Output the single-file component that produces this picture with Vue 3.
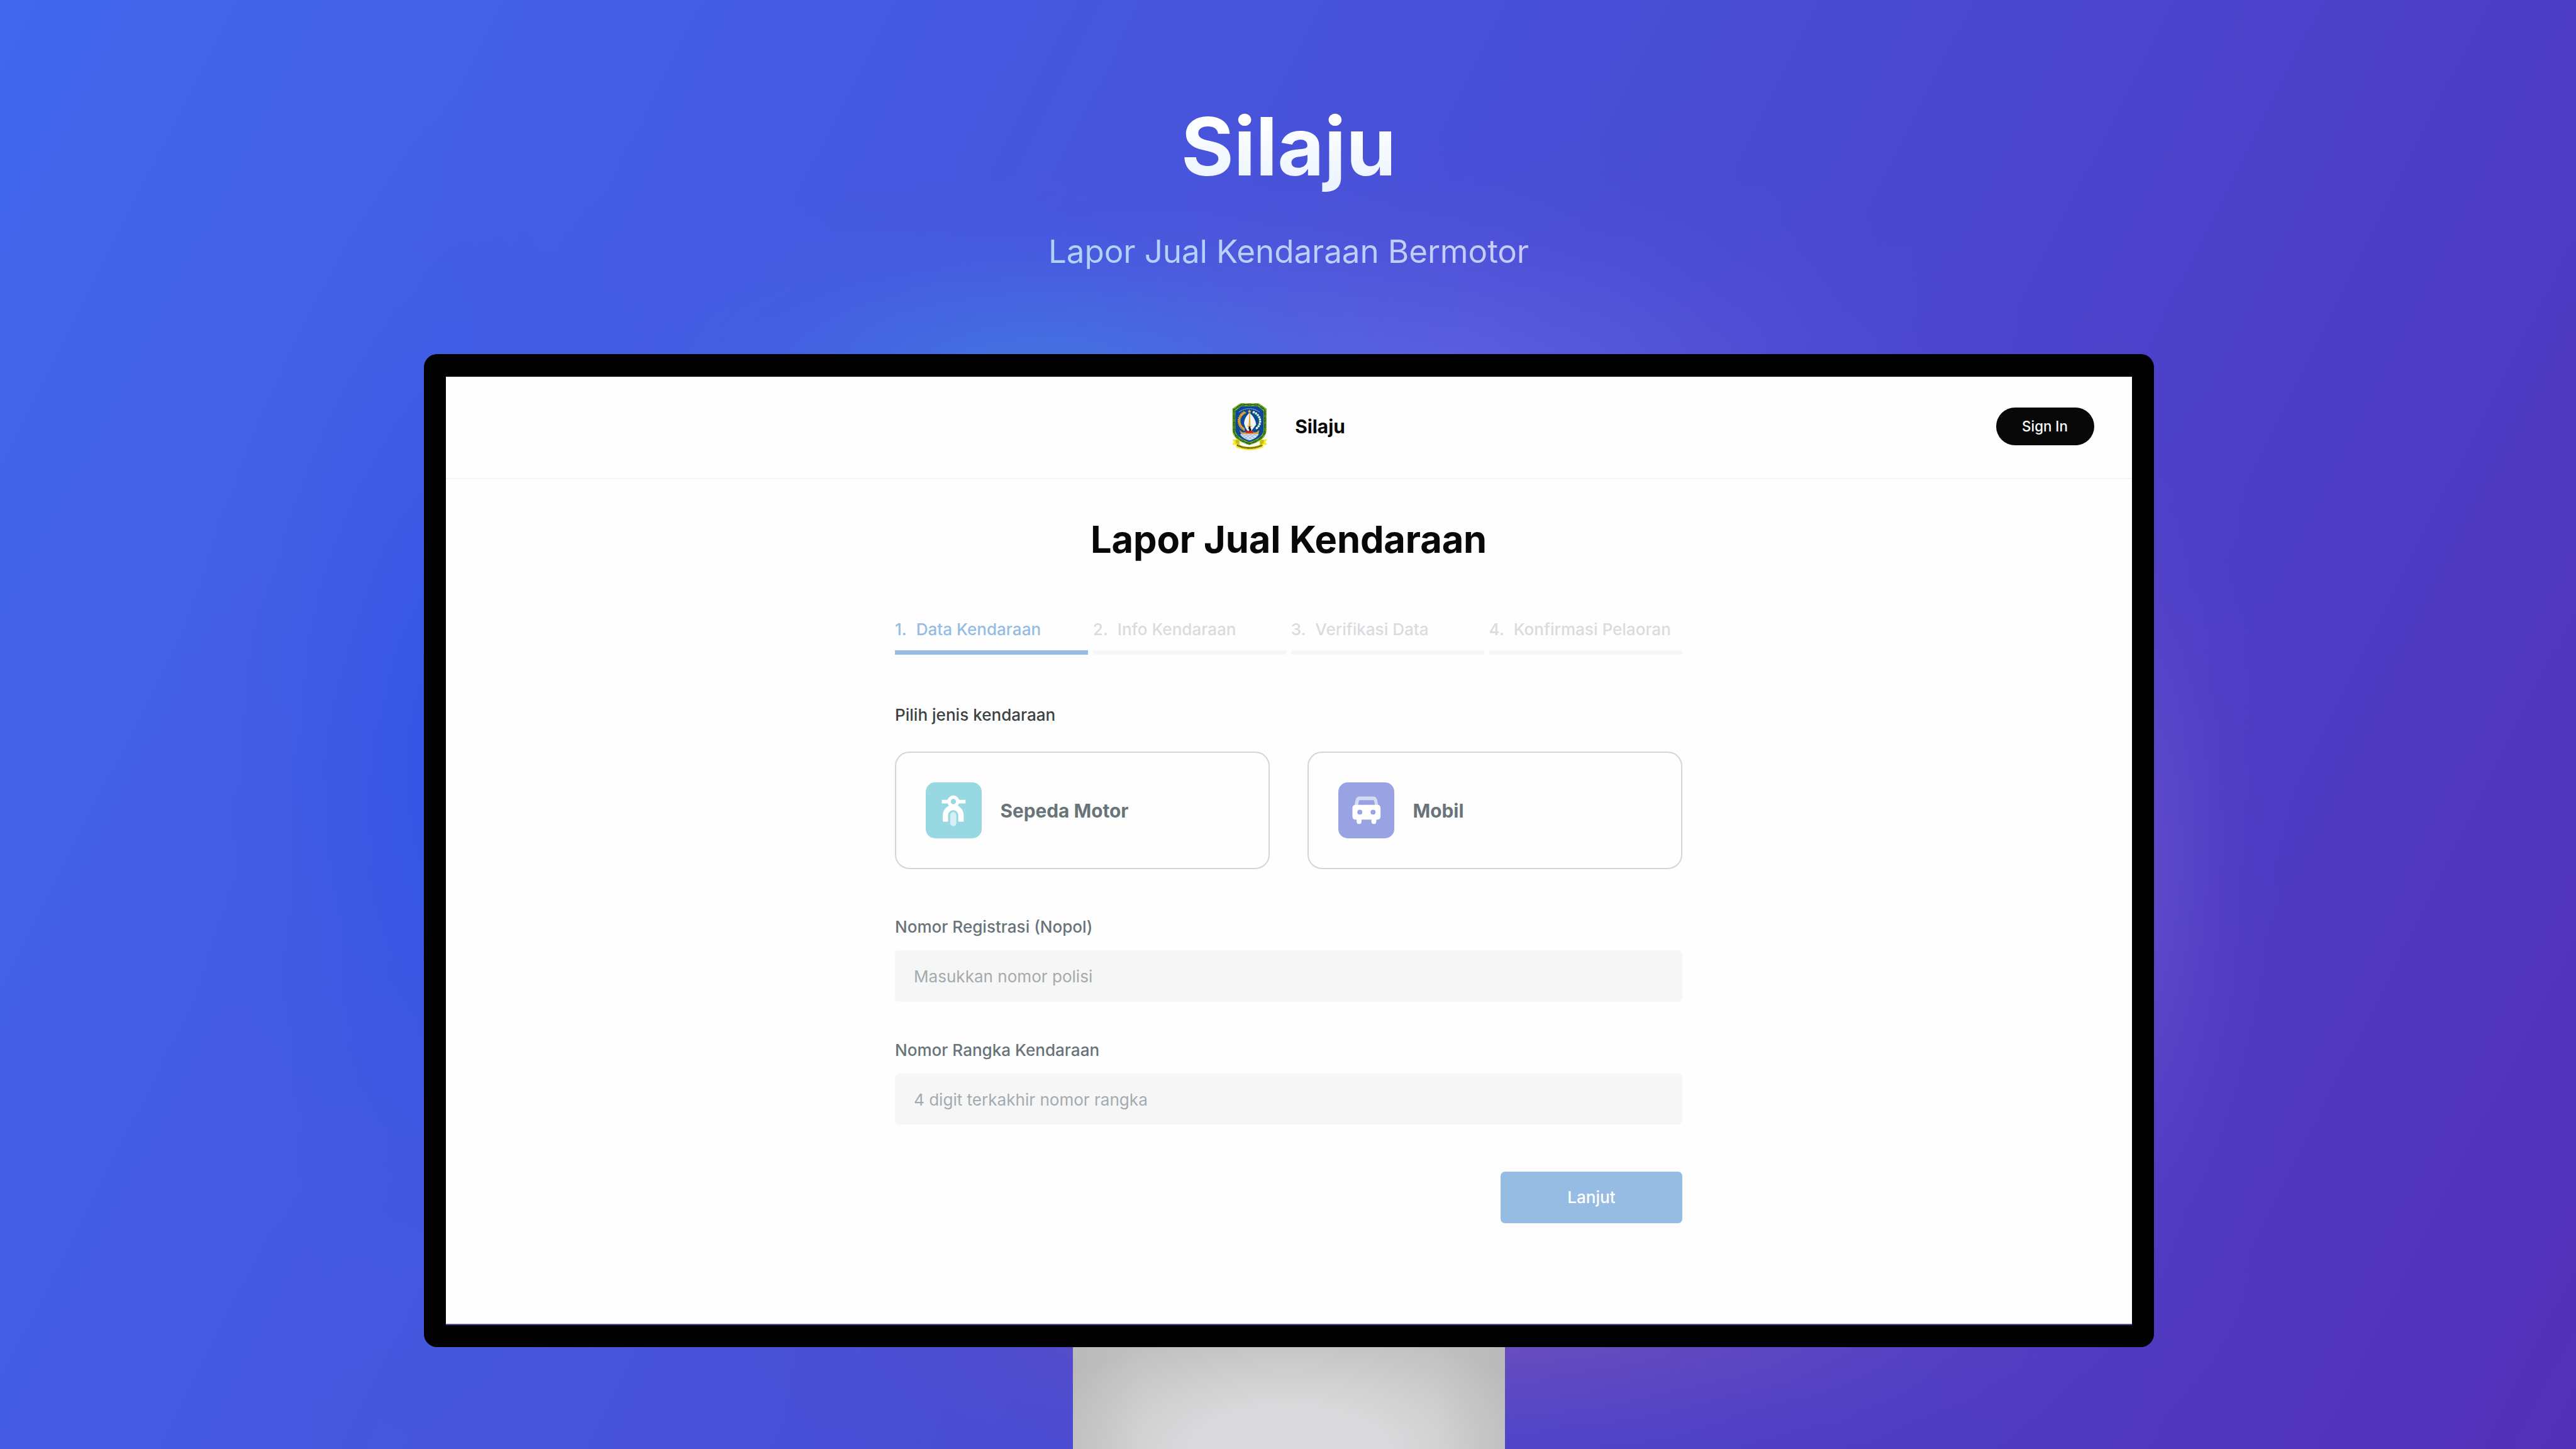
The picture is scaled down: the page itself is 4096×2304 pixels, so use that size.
<script setup>
const steps = [
  { n: '1.', label: 'Data Kendaraan', active: true },
  { n: '2.', label: 'Info Kendaraan' },
  { n: '3.', label: 'Verifikasi Data' },
  { n: '4.', label: 'Konfirmasi Pelaoran' },
]
const fields = [
  { label: 'Nomor Registrasi (Nopol)', hint: 'Masukkan nomor polisi' },
  { label: 'Nomor Rangka Kendaraan', hint: '4 digit terkakhir nomor rangka' },
]
// wreath on the crest: rice ears on the left, cotton on the right
const onArc = (deg, rx, ry) => {
  const a = (deg * Math.PI) / 180
  return { x: 52 + rx * Math.cos(a), y: 53 - ry * Math.sin(a) }
}
const grains = Array.from({ length: 13 }, (_, i) => {
  const deg = 118 + i * 10
  return { ...onArc(deg, 31, 29), r: 90 - deg }
})
const cotton = Array.from({ length: 9 }, (_, i) => onArc(66 - i * 14, 32, 29))
</script>

<template>
  <main class="stage">
    <header class="hero">
      <h1 class="hero-title">Silaju</h1>
      <p class="hero-sub">Lapor Jual Kendaraan Bermotor</p>
    </header>

    <section class="monitor">
      <div class="screen">
        <nav class="nav">
          <span></span>
          <div class="brand">
            <svg class="crest" viewBox="0 0 105 140">
              <path d="M0 108h22v16H0l6-8z" fill="#f7ea1c" />
              <path d="M105 108H83v16h22l-6-8z" fill="#f7ea1c" />
              <path d="M10 110q5-3 12 3v14L12 121z M95 110q-5-3-12 3v14l10-6z" fill="#c9bd12" />
              <path d="M12 119q40 21 81 0v13q-40 16-81 0z" fill="#f7ea1c" />
              <path d="M15 125q37 17 75 0" fill="none" stroke="#4c4a12" stroke-width="5" stroke-dasharray="3.2 1" />
              <path d="M25 0h55l23 16v64q0 30-51 45Q1 110 1 80V16z" fill="#6cb52d" />
              <path d="M27 4.500h51l20 15v60q0 26-46 41Q6 105.500 6 79.500v-60z" fill="none" stroke="#12210a" stroke-width="4.600" stroke-dasharray="10 10" />
              <path d="M27 4.500h51l20 15v60q0 26-46 41Q6 105.500 6 79.500v-60z" fill="none" stroke="#6cb52d" stroke-width="2" stroke-dasharray="8 12" stroke-dashoffset="-1" />
              <path d="M27 4.500h51l20 15v60q0 26-46 41Q6 105.500 6 79.500v-60z" fill="none" stroke="#12210a" stroke-width="1.800" stroke-dasharray="10 10" stroke-dashoffset="10" />
              <path d="M28 9h49l17 14v56q0 23-42 37Q10 102 10 79V23z" fill="#0d4796" />
              <path d="M21 26q30-20 61 0" fill="none" stroke="#b9cfe8" stroke-width="2" stroke-dasharray="2 1" />
              <g fill="#e3a72c">
                <ellipse v-for="(g, i) in grains" :key="i" :cx="g.x" :cy="g.y" rx="5.500" ry="2.300" :transform="`rotate(${g.r + 55} ${g.x} ${g.y})`" />
              </g>
              <g v-for="(c, i) in cotton" :key="'c' + i">
                <circle :cx="c.x - 1.500" :cy="c.y + 1.500" r="3.600" fill="#2a9b62" />
                <circle :cx="c.x" :cy="c.y" r="3.200" fill="#f1f6f4" />
              </g>
              <path d="M51 29Q36 44 36 60q2 12 11 23h10q8-10 15-20-3-20-19-34z" fill="#f2f5f8" />
              <path d="M51.500 28h2l2 41h-6z" fill="#e3a72c" />
              <path d="M52 18.500l1.500 3.500 4 .2-3 2.500 1 4-3.500-2.200-3.500 2.200 1-4-3-2.500 4-.2z" fill="#f3c04a" />
              <path d="M45 67.500h14v2H45z" fill="#e3a72c" />
              <path d="M50 69h5v5q5 5 0 10h-6q5-4 0-8z" fill="#241a10" />
              <path d="M22 80l9 7h41l9-7-2 12H28z" fill="#e0a63a" />
              <path d="M38 83h28l-4 6H42z" fill="#d4261f" />
              <path d="M24 92h56Q74 105 52 111 30 105 24 92z" fill="#dfe9f5" />
              <path d="M28 96q3-3 6 0t6 0 6 0 6 0 6 0 6 0 6 0 6 0M32 101q3-3 6 0t6 0 6 0 6 0 6 0 6 0M40 106q3-3 6 0t6 0 6 0 6 0" fill="none" stroke="#6f9fd4" stroke-width="1.600" />
            </svg>
            <span class="brand-name">Silaju</span>
          </div>
          <button class="signin">Sign In</button>
        </nav>

        <div class="form">
          <h2 class="title">Lapor Jual Kendaraan</h2>

          <ol class="steps">
            <li v-for="s in steps" :key="s.n" class="step" :class="{ active: s.active }">
              <span class="step-n">{{ s.n }}</span><span>{{ s.label }}</span>
            </li>
          </ol>

          <p class="pick">Pilih jenis kendaraan</p>
          <div class="cards">
            <div class="card">
              <span class="tile teal">
                <svg viewBox="0 0 48 48">
                  <path d="M13.800 14.900h6v3.200h-6zM27.600 14.900h6.500v3.200h-6.500z" fill="#fff" />
                  <path d="M20.200 19.800c.9-.7 1.500-.5 3.400-.5s2.500-.2 3.500.5c3.200 1.600 5.400 4.600 5.400 8.400v5.500H27.900V28a4.380 4.380 0 0 0-8.750 0v5.700h-4.500v-5.500c0-3.800 2.300-6.800 5.550-8.400z" fill="#fff" />
                  <circle cx="23.650" cy="16.450" r="3.720" fill="#98d8e3" stroke="#fff" stroke-width="2.950" />
                  <rect x="21" y="25.500" width="5.200" height="12.100" rx="2.600" fill="#d8eff6" />
                </svg>
              </span>
              <span class="card-name">Sepeda Motor</span>
            </div>
            <div class="card">
              <span class="tile violet">
                <svg viewBox="0 0 48 48">
                  <path d="M13.900 19.800l.8-4.300c.5-2.300 1.700-3.350 3.800-3.350h11.100c2.100 0 3.300 1.050 3.800 3.350l.8 4.300h-2.800l-.6-3.600c-.1-.7-.5-1-1.200-1H18.800c-.7 0-1.100.3-1.200 1l-.6 3.600z" fill="#d3dcf1" />
                  <path d="M14.800 19.300h18.700c1.700 0 2.700 1 2.700 2.700v7.300c0 1.700-1 2.700-2.700 2.700h-.9v1.600a2.100 2.100 0 0 1-4.200 0V32h-8.500v1.600a2.100 2.100 0 0 1-4.200 0V32h-.9c-1.700 0-2.700-1-2.700-2.700V22c0-1.700 1-2.700 2.700-2.700zM18.450 23.400a2.150 2.150 0 1 0 0 4.300 2.150 2.150 0 0 0 0-4.300zM29.800 23.400a2.150 2.150 0 1 0 0 4.300 2.150 2.150 0 0 0 0-4.300z" fill="#fff" fill-rule="evenodd" />
                </svg>
              </span>
              <span class="card-name">Mobil</span>
            </div>
          </div>

          <div v-for="f in fields" :key="f.label" class="field">
            <label class="label">{{ f.label }}</label>
            <div class="input">{{ f.hint }}</div>
          </div>

          <button class="next">Lanjut</button>
        </div>
      </div>
    </section>

    <div class="stand"></div>
  </main>
</template>

<style>
body { margin: 0; overflow: hidden; }
</style>

<style scoped>
.stage {
  box-sizing: border-box;
  width: 4096px;
  height: 2304px;
  padding-left: 2px;
  overflow: hidden;
  display: flex;
  flex-direction: column;
  align-items: center;
  font-family: Inter, "Liberation Sans", sans-serif;
  background:
    radial-gradient(ellipse 780px 320px at 1640px 600px, rgba(64, 126, 228, .8), rgba(62, 120, 228, .5) 30%, rgba(60, 112, 228, .2) 60%, rgba(60, 108, 228, .05) 82%, rgba(60, 108, 228, 0)),
    radial-gradient(ellipse 1080px 410px at 2200px 620px, rgba(104, 106, 228, .74), rgba(100, 100, 226, .5) 30%, rgba(96, 94, 224, .22) 60%, rgba(92, 88, 222, .06) 82%, rgba(92, 88, 222, 0)),
    radial-gradient(ellipse 460px 1100px at 740px 1230px, rgba(42, 84, 232, .78), rgba(46, 84, 230, .5) 30%, rgba(52, 86, 228, .22) 60%, rgba(56, 88, 228, .06) 82%, rgba(56, 88, 228, 0)),
    radial-gradient(ellipse 290px 850px at 3370px 1380px, rgba(112, 88, 204, .68), rgba(106, 84, 204, .4) 30%, rgba(98, 76, 204, .16) 60%, rgba(90, 70, 204, .04) 82%, rgba(90, 70, 204, 0)),
    radial-gradient(ellipse 1300px 330px at 2330px 2080px, rgba(126, 86, 180, .78), rgba(118, 82, 182, .5) 30%, rgba(106, 78, 188, .22) 60%, rgba(94, 74, 190, .06) 82%, rgba(94, 74, 190, 0)),
    linear-gradient(117deg, #4167ec 0%, #455be2 25%, #484fd6 48%, #4c41ca 70%, #5330b8 100%);
}
.hero { display: flex; flex-direction: column; align-items: center; height: 563px; }
.hero-title {
  margin: 155px 0 0;
  font-size: 128px;
  line-height: 156px;
  font-weight: 700;
  background: linear-gradient(180deg, #fff 20%, #e8f2ff 100%);
  -webkit-background-clip: text;
  background-clip: text;
  color: transparent;
}
.hero-sub {
  margin: 56px 0 0;
  font-size: 51.2px;
  line-height: 64px;
  font-weight: 400;
  letter-spacing: -.12px;
  background: linear-gradient(90deg, #b0d2f8, #bccffb 50%, #c7cbf9);
  -webkit-background-clip: text;
  background-clip: text;
  color: transparent;
}
.monitor {
  flex: none;
  box-sizing: border-box;
  width: 2751px;
  height: 1579px;
  border-radius: 21px;
  background: #000;
  padding: 36px 35px 0;
}
.screen {
  height: 1506px;
  background: #fefefe;
  border-bottom: 2px solid #4a4a9c;
}
.nav {
  box-sizing: border-box;
  height: 163px;
  display: grid;
  grid-template-columns: 1fr auto 1fr;
  align-items: center;
  padding: 0 60px 3px;
  border-bottom: 2px solid #f3f4f5;
}
.brand { display: flex; align-items: center; gap: 44px; }
.crest { width: 56px; height: 75px; display: block; }
.brand-name { font-size: 29.800px; line-height: 36px; font-weight: 700; color: #080808; }
.signin {
  justify-self: end;
  width: 156px;
  height: 60px;
  padding: 0;
  border: 0;
  border-radius: 30px;
  background: #080808;
  color: #fff;
  font: 500 22.340px/28px Inter, sans-serif;
}
.form { width: 1252px; margin: 0 auto; display: flex; flex-direction: column; }
.title {
  margin: 59px 0 0;
  font-size: 59.600px;
  line-height: 72px;
  font-weight: 700;
  letter-spacing: -.12px;
  text-align: center;
  color: #080808;
}
.steps { list-style: none; margin: 92px 0 0; padding: 0; display: flex; gap: 7.400px; }
.step {
  flex: 1;
  display: flex;
  gap: 15px;
  padding-bottom: 17px;
  border-bottom: 7.500px solid #f7f7f8;
  font-size: 26.070px;
  line-height: 32px;
  font-weight: 500;
  color: #d9dcde;
  white-space: nowrap;
}
.step.active { color: #96bce4; border-color: #96bce4; }
.pick { margin: 80px 0 0; font-size: 26.070px; line-height: 32px; font-weight: 500; color: #3c4346; }
.cards { display: flex; gap: 60px; margin-top: 42px; }
.card {
  flex: 1;
  box-sizing: border-box;
  height: 187px;
  border: 2px solid #d3d5d6;
  border-radius: 23px;
  display: flex;
  align-items: center;
  gap: 30px;
  padding-left: 46.5px;
}
.tile { width: 89px; height: 89px; border-radius: 15px; overflow: hidden; }
.tile svg { display: block; width: 89px; height: 89px; }
.teal { background: #98d8e3; }
.violet { background: #99a3e3; }
.card-name { font-size: 29.800px; line-height: 36px; font-weight: 700; color: #68747a; }
.field { margin-top: 76px; }
.field + .field { margin-top: 61px; }
.label { display: block; font-size: 26.070px; line-height: 32px; font-weight: 500; color: #68747a; }
.input {
  margin-top: 21px;
  height: 81.600px;
  border-radius: 7px;
  background: #f6f6f7;
  padding-left: 30px;
  font-size: 26.070px;
  line-height: 84px;
  color: #a3abaf;
}
.next {
  align-self: flex-end;
  margin-top: 75px;
  width: 289px;
  height: 82px;
  border: 0;
  border-radius: 7px;
  background: #97bce4;
  color: #fff;
  font: 500 26.070px/32px Inter, sans-serif;
}
.stand {
  flex: none;
  width: 687px;
  height: 162px;
  background:
    linear-gradient(90deg, rgba(160, 160, 160, .2), rgba(160, 160, 160, 0) 16%, rgba(160, 160, 160, 0) 84%, rgba(160, 160, 160, .2)),
    radial-gradient(ellipse 440px 190px at 50% 100%, #dadadc 0%, #dadadc 35%, #c0c0c1 100%);
}
</style>
